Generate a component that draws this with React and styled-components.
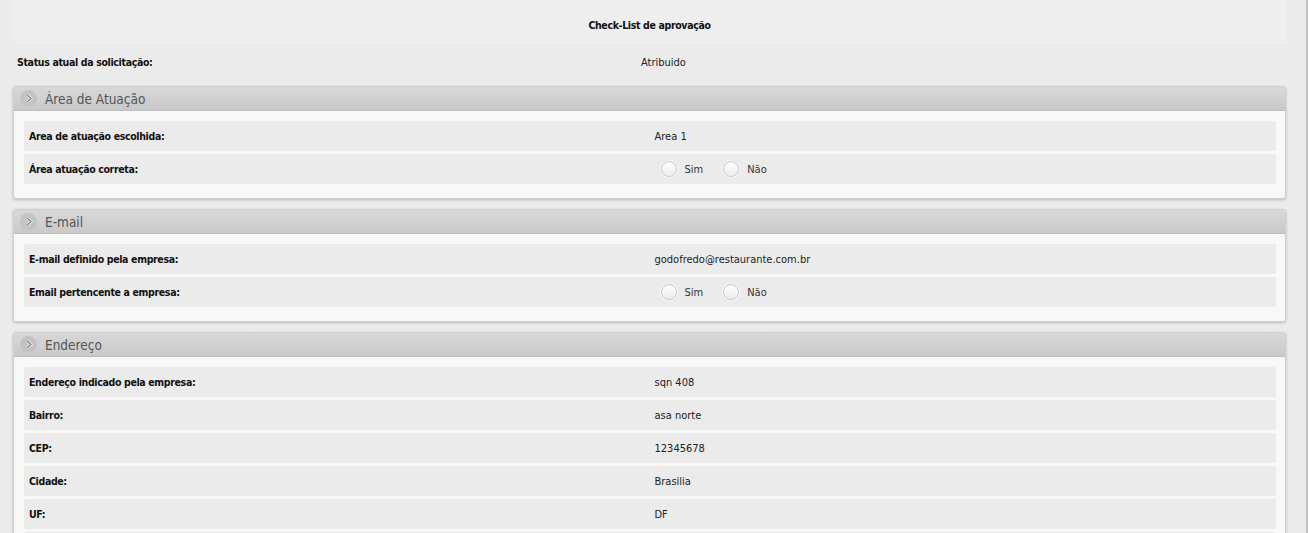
import React from 'react';
import styled, { createGlobalStyle } from 'styled-components';

const GlobalStyle = createGlobalStyle`
  html, body {
    margin: 0;
    padding: 0;
    background: #ebebeb;
  }

  body {
    font-family: "DejaVu Sans Condensed", "Liberation Sans", sans-serif;
    font-size: 11px;
    color: #111;
    overflow: hidden;
  }
`;

const sections = [
  {
    title: 'Área de Atuação',
    rows: [
      { label: 'Area de atuação escolhida:', value: 'Area 1' },
      { label: 'Área atuação correta:', radio: true },
    ],
  },
  {
    title: 'E-mail',
    rows: [
      { label: 'E-mail definido pela empresa:', value: 'godofredo@restaurante.com.br' },
      { label: 'Email pertencente a empresa:', radio: true },
    ],
  },
  {
    title: 'Endereço',
    rows: [
      { label: 'Endereço indicado pela empresa:', value: 'sqn 408' },
      { label: 'Bairro:', value: 'asa norte' },
      { label: 'CEP:', value: '12345678' },
      { label: 'Cidade:', value: 'Brasilia' },
      { label: 'UF:', value: 'DF' },
      // next row only shows its top edge in the window
      { label: '', value: '' },
    ],
  },
];

const Page = styled.div`
  height: 533px;
  box-sizing: border-box;
  padding: 0 20px 0 13px;
  border-right: 2px solid #c4c4c4;
  overflow: hidden;
`;

const TitleBar = styled.div`
  height: 43px;
  box-sizing: border-box;
  padding-top: 19px;
  background: #eeeeee;
  text-align: center;
  font-weight: bold;
  font-size: 10.5px;
  letter-spacing: -0.35px;
  color: #111;
`;

const StatusRow = styled.div`
  display: grid;
  grid-template-columns: 628px 1fr;
  align-items: center;
  height: 43px;
  box-sizing: border-box;
  padding-bottom: 5px;
`;

const Label = styled.div`
  font-weight: bold;
  font-size: 10.5px;
  letter-spacing: -0.35px;
  color: #111;
  padding-left: ${p => p.$indent || 0}px;
`;

const Value = styled.div`
  color: #222;
`;

const Panel = styled.section`
  background: #f8f8f6;
  border: 1px solid #cfcfcf;
  border-radius: 3px;
  box-shadow: 0 1px 3px rgba(0, 0, 0, 0.22);
  margin-bottom: 10px;
  overflow: hidden;
`;

const PanelHeader = styled.div`
  display: flex;
  align-items: center;
  gap: 8px;
  height: 23px;
  padding-left: 6px;
  background: linear-gradient(#d8d8d8, #c9c9c9);
  border-bottom: 1px solid #bdbdbd;
`;

const Toggle = styled.span`
  display: flex;
  align-items: center;
  justify-content: center;
  width: 17px;
  height: 17px;
  border-radius: 50%;
  background: #c3c3c3;
`;

const PanelTitle = styled.span`
  font-size: 13.5px;
  color: #555;
`;

const PanelBody = styled.div`
  display: flex;
  flex-direction: column;
  gap: 3px;
  padding: 10px 9px 14px 10px;
`;

const Row = styled.div`
  display: grid;
  grid-template-columns: 1fr 1fr;
  align-items: center;
  height: 30px;
  padding-left: 5px;
  background: #ebebeb;
  border-radius: 2px;
`;

const ValueCell = styled.div`
  display: flex;
  align-items: center;
  padding-left: 2px;
  color: #222;
`;

const RadioOption = styled.label`
  display: flex;
  align-items: center;
  gap: 8px;
  margin-left: 6px;
  margin-right: 14px;
  color: #333;
`;

const RadioCircle = styled.span`
  width: 16px;
  height: 16px;
  box-sizing: border-box;
  border-radius: 50%;
  border: 1px solid #cdcdcd;
  background: linear-gradient(#fdfdfd, #ececec);
  box-shadow: 0 0 0 1px rgba(255, 255, 255, 0.6), inset 0 1px 1px rgba(0, 0, 0, 0.04);
`;

const Chevron = () => (
  <svg width="8" height="9" viewBox="0 0 8 9">
    <path d="M2 1 L6 4.5 L2 8" fill="none" stroke="#f6f6f6" strokeWidth="2.6" />
    <path d="M2 1 L6 4.5 L2 8" fill="none" stroke="#7d7d7d" strokeWidth="1.2" />
  </svg>
);

const Radio = ({ label }) => (
  <RadioOption>
    <RadioCircle />
    {label}
  </RadioOption>
);

const Section = ({ title, rows }) => (
  <Panel>
    <PanelHeader>
      <Toggle><Chevron /></Toggle>
      <PanelTitle>{title}</PanelTitle>
    </PanelHeader>
    <PanelBody>
      {rows.map((row, i) => (
        <Row key={i}>
          <Label>{row.label}</Label>
          <ValueCell>
            {row.radio
              ? <><Radio label="Sim" /><Radio label="Não" /></>
              : row.value}
          </ValueCell>
        </Row>
      ))}
    </PanelBody>
  </Panel>
);

const App = () => (
  <>
    <GlobalStyle />
    <Page>
      <TitleBar>Check-List de aprovação</TitleBar>
      <StatusRow>
        <Label $indent={4}>Status atual da solicitação:</Label>
        <Value>Atribuido</Value>
      </StatusRow>
      {sections.map(section => (
        <Section key={section.title} {...section} />
      ))}
    </Page>
  </>
);

export default App;
